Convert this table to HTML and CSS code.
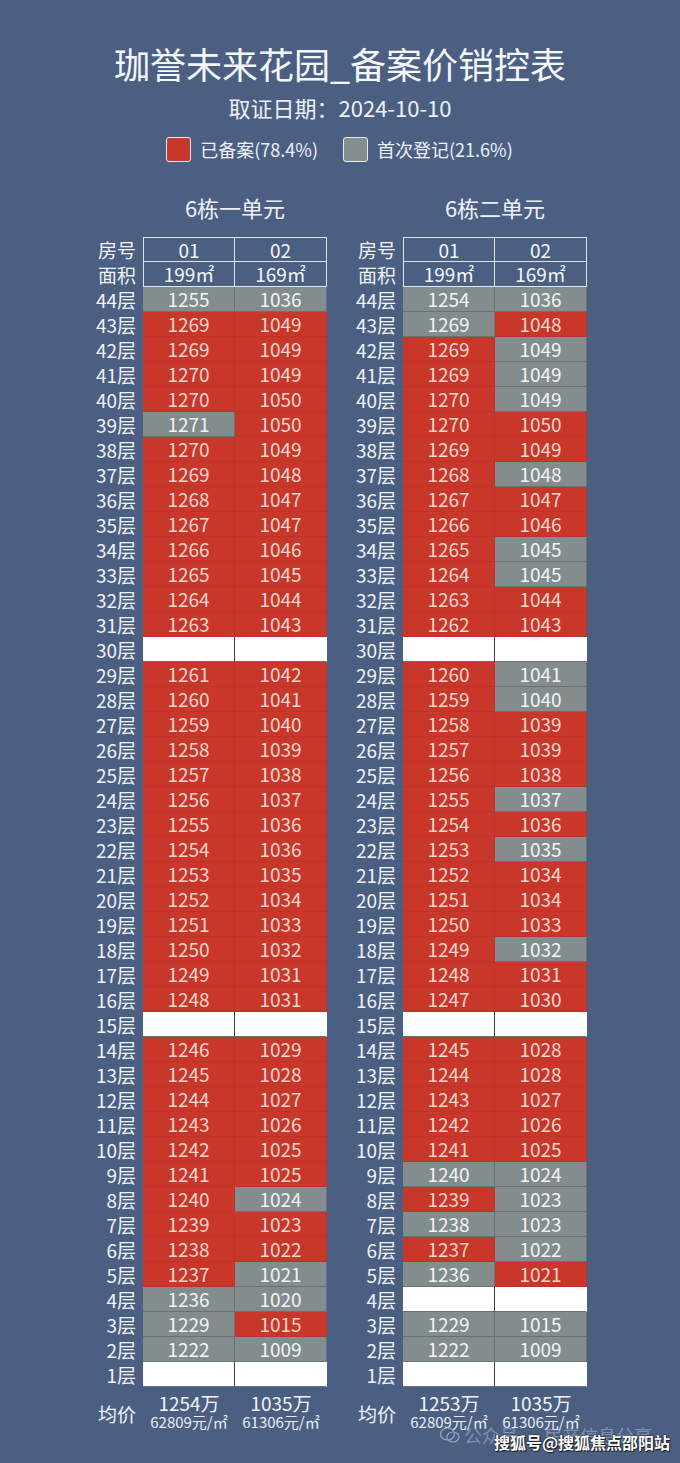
FILE: index.html
```html
<!DOCTYPE html>
<html lang="zh-CN">
<head>
<meta charset="utf-8">
<title>珈誉未来花园_备案价销控表</title>
<link rel="stylesheet" href="styles.css">
</head>
<body>
<div class="page">
  <h1 class="title">珈誉未来花园_备案价销控表</h1>
  <div class="date">取证日期：2024-10-10</div>
  <div class="legend">
    <span class="legend-item"><span class="swatch swatch-red"></span>已备案(78.4%)</span>
    <span class="legend-item"><span class="swatch swatch-grey"></span>首次登记(21.6%)</span>
  </div>

  <div class="blocks">
    <section class="block">
      <h2 class="block-title">6栋一单元</h2>
      <div class="grid">
        <span class="fl">房号</span><span class="hc top first">01</span><span class="hc top">02</span>
        <span class="fl">面积</span><span class="hc first">199㎡</span><span class="hc">169㎡</span>
        <span class="fl">44层</span><span class="c g">1255</span><span class="c g">1036</span>
        <span class="fl">43层</span><span class="c r">1269</span><span class="c r">1049</span>
        <span class="fl">42层</span><span class="c r">1269</span><span class="c r">1049</span>
        <span class="fl">41层</span><span class="c r">1270</span><span class="c r">1049</span>
        <span class="fl">40层</span><span class="c r">1270</span><span class="c r">1050</span>
        <span class="fl">39层</span><span class="c g">1271</span><span class="c r">1050</span>
        <span class="fl">38层</span><span class="c r">1270</span><span class="c r">1049</span>
        <span class="fl">37层</span><span class="c r">1269</span><span class="c r">1048</span>
        <span class="fl">36层</span><span class="c r">1268</span><span class="c r">1047</span>
        <span class="fl">35层</span><span class="c r">1267</span><span class="c r">1047</span>
        <span class="fl">34层</span><span class="c r">1266</span><span class="c r">1046</span>
        <span class="fl">33层</span><span class="c r">1265</span><span class="c r">1045</span>
        <span class="fl">32层</span><span class="c r">1264</span><span class="c r">1044</span>
        <span class="fl">31层</span><span class="c r">1263</span><span class="c r">1043</span>
        <span class="fl">30层</span><span class="c w first"></span><span class="c w"></span>
        <span class="fl">29层</span><span class="c r">1261</span><span class="c r">1042</span>
        <span class="fl">28层</span><span class="c r">1260</span><span class="c r">1041</span>
        <span class="fl">27层</span><span class="c r">1259</span><span class="c r">1040</span>
        <span class="fl">26层</span><span class="c r">1258</span><span class="c r">1039</span>
        <span class="fl">25层</span><span class="c r">1257</span><span class="c r">1038</span>
        <span class="fl">24层</span><span class="c r">1256</span><span class="c r">1037</span>
        <span class="fl">23层</span><span class="c r">1255</span><span class="c r">1036</span>
        <span class="fl">22层</span><span class="c r">1254</span><span class="c r">1036</span>
        <span class="fl">21层</span><span class="c r">1253</span><span class="c r">1035</span>
        <span class="fl">20层</span><span class="c r">1252</span><span class="c r">1034</span>
        <span class="fl">19层</span><span class="c r">1251</span><span class="c r">1033</span>
        <span class="fl">18层</span><span class="c r">1250</span><span class="c r">1032</span>
        <span class="fl">17层</span><span class="c r">1249</span><span class="c r">1031</span>
        <span class="fl">16层</span><span class="c r">1248</span><span class="c r">1031</span>
        <span class="fl">15层</span><span class="c w first"></span><span class="c w"></span>
        <span class="fl">14层</span><span class="c r">1246</span><span class="c r">1029</span>
        <span class="fl">13层</span><span class="c r">1245</span><span class="c r">1028</span>
        <span class="fl">12层</span><span class="c r">1244</span><span class="c r">1027</span>
        <span class="fl">11层</span><span class="c r">1243</span><span class="c r">1026</span>
        <span class="fl">10层</span><span class="c r">1242</span><span class="c r">1025</span>
        <span class="fl">9层</span><span class="c r">1241</span><span class="c r">1025</span>
        <span class="fl">8层</span><span class="c r">1240</span><span class="c g">1024</span>
        <span class="fl">7层</span><span class="c r">1239</span><span class="c r">1023</span>
        <span class="fl">6层</span><span class="c r">1238</span><span class="c r">1022</span>
        <span class="fl">5层</span><span class="c r">1237</span><span class="c g">1021</span>
        <span class="fl">4层</span><span class="c g">1236</span><span class="c g">1020</span>
        <span class="fl">3层</span><span class="c g">1229</span><span class="c r">1015</span>
        <span class="fl">2层</span><span class="c g">1222</span><span class="c g">1009</span>
        <span class="fl">1层</span><span class="c w first"></span><span class="c w"></span>
        <span class="fl avg-label">均价</span>
        <span class="avg"><span class="avg-total">1254万</span><span class="avg-unit">62809元/㎡</span></span>
        <span class="avg"><span class="avg-total">1035万</span><span class="avg-unit">61306元/㎡</span></span>
      </div>
    </section>

    <section class="block">
      <h2 class="block-title">6栋二单元</h2>
      <div class="grid">
        <span class="fl">房号</span><span class="hc top first">01</span><span class="hc top">02</span>
        <span class="fl">面积</span><span class="hc first">199㎡</span><span class="hc">169㎡</span>
        <span class="fl">44层</span><span class="c g">1254</span><span class="c g">1036</span>
        <span class="fl">43层</span><span class="c g">1269</span><span class="c r">1048</span>
        <span class="fl">42层</span><span class="c r">1269</span><span class="c g">1049</span>
        <span class="fl">41层</span><span class="c r">1269</span><span class="c g">1049</span>
        <span class="fl">40层</span><span class="c r">1270</span><span class="c g">1049</span>
        <span class="fl">39层</span><span class="c r">1270</span><span class="c r">1050</span>
        <span class="fl">38层</span><span class="c r">1269</span><span class="c r">1049</span>
        <span class="fl">37层</span><span class="c r">1268</span><span class="c g">1048</span>
        <span class="fl">36层</span><span class="c r">1267</span><span class="c r">1047</span>
        <span class="fl">35层</span><span class="c r">1266</span><span class="c r">1046</span>
        <span class="fl">34层</span><span class="c r">1265</span><span class="c g">1045</span>
        <span class="fl">33层</span><span class="c r">1264</span><span class="c g">1045</span>
        <span class="fl">32层</span><span class="c r">1263</span><span class="c r">1044</span>
        <span class="fl">31层</span><span class="c r">1262</span><span class="c r">1043</span>
        <span class="fl">30层</span><span class="c w first"></span><span class="c w"></span>
        <span class="fl">29层</span><span class="c r">1260</span><span class="c g">1041</span>
        <span class="fl">28层</span><span class="c r">1259</span><span class="c g">1040</span>
        <span class="fl">27层</span><span class="c r">1258</span><span class="c r">1039</span>
        <span class="fl">26层</span><span class="c r">1257</span><span class="c r">1039</span>
        <span class="fl">25层</span><span class="c r">1256</span><span class="c r">1038</span>
        <span class="fl">24层</span><span class="c r">1255</span><span class="c g">1037</span>
        <span class="fl">23层</span><span class="c r">1254</span><span class="c r">1036</span>
        <span class="fl">22层</span><span class="c r">1253</span><span class="c g">1035</span>
        <span class="fl">21层</span><span class="c r">1252</span><span class="c r">1034</span>
        <span class="fl">20层</span><span class="c r">1251</span><span class="c r">1034</span>
        <span class="fl">19层</span><span class="c r">1250</span><span class="c r">1033</span>
        <span class="fl">18层</span><span class="c r">1249</span><span class="c g">1032</span>
        <span class="fl">17层</span><span class="c r">1248</span><span class="c r">1031</span>
        <span class="fl">16层</span><span class="c r">1247</span><span class="c r">1030</span>
        <span class="fl">15层</span><span class="c w first"></span><span class="c w"></span>
        <span class="fl">14层</span><span class="c r">1245</span><span class="c r">1028</span>
        <span class="fl">13层</span><span class="c r">1244</span><span class="c r">1028</span>
        <span class="fl">12层</span><span class="c r">1243</span><span class="c r">1027</span>
        <span class="fl">11层</span><span class="c r">1242</span><span class="c r">1026</span>
        <span class="fl">10层</span><span class="c r">1241</span><span class="c r">1025</span>
        <span class="fl">9层</span><span class="c g">1240</span><span class="c g">1024</span>
        <span class="fl">8层</span><span class="c r">1239</span><span class="c g">1023</span>
        <span class="fl">7层</span><span class="c g">1238</span><span class="c g">1023</span>
        <span class="fl">6层</span><span class="c r">1237</span><span class="c g">1022</span>
        <span class="fl">5层</span><span class="c g">1236</span><span class="c r">1021</span>
        <span class="fl">4层</span><span class="c w first"></span><span class="c w"></span>
        <span class="fl">3层</span><span class="c g">1229</span><span class="c g">1015</span>
        <span class="fl">2层</span><span class="c g">1222</span><span class="c g">1009</span>
        <span class="fl">1层</span><span class="c w first"></span><span class="c w"></span>
        <span class="fl avg-label">均价</span>
        <span class="avg"><span class="avg-total">1253万</span><span class="avg-unit">62809元/㎡</span></span>
        <span class="avg"><span class="avg-total">1035万</span><span class="avg-unit">61306元/㎡</span></span>
      </div>
    </section>
  </div>

  <div class="wm-faint">
    <svg class="wm-icon" width="20" height="16" viewBox="0 0 20 16" aria-hidden="true">
      <ellipse cx="7.5" cy="7" rx="7" ry="6" fill="none" stroke="#9aa5b8" stroke-width="1.2"/>
      <ellipse cx="13" cy="10" rx="6" ry="5" fill="none" stroke="#9aa5b8" stroke-width="1.2"/>
    </svg>
    <span>公众号 · 房产信息分享</span>
  </div>
  <div class="wm-strong">搜狐号@搜狐焦点邵阳站</div>
</div>
</body>
</html>
```

FILE: styles.css
```css
html, body {
  margin: 0;
  padding: 0;
}

body {
  background: #4b5f83;
  color: #eef2f6;
  font-family: "Noto Sans CJK SC", "Microsoft YaHei", sans-serif;
}

.page {
  position: relative;
  height: 1463px;
  box-sizing: border-box;
  padding-top: 41px;
  overflow: hidden;
}

.title {
  margin: 0;
  font-size: 36px;
  line-height: 44px;
  font-weight: 400;
  text-align: center;
  color: #f4f6f9;
}

.date {
  margin-top: 7px;
  font-size: 22px;
  line-height: 30px;
  text-align: center;
  color: #eef1f5;
}

.legend {
  margin-top: 15px;
  display: flex;
  justify-content: center;
  gap: 25px;
  padding-right: 1px;
}

.legend-item {
  display: flex;
  align-items: center;
  gap: 9px;
  font-size: 18px;
  line-height: 25px;
  color: #eef1f5;
}

.swatch {
  width: 25px;
  height: 25px;
  box-sizing: border-box;
  border: 1.5px solid #e9ecef;
  border-radius: 3px;
}

.swatch-red { background: #c9362a; }
.swatch-grey { background: #858f90; }

.blocks {
  display: flex;
  gap: 13px;
  padding-left: 80px;
  margin-top: 30px;
}

.block {
  width: 247px;
}

.block-title {
  margin: 0 0 15px 63px;
  width: 184px;
  font-size: 22px;
  line-height: 30px;
  font-weight: 400;
  text-align: center;
  color: #eef1f5;
}

.grid {
  display: grid;
  grid-template-columns: 63px 92px 92px;
  grid-auto-rows: 25px;
}

.fl {
  padding-right: 7px;
  text-align: right;
  font-size: 19px;
  line-height: 25px;
  color: #f0f3f7;
  white-space: nowrap;
}

.hc,
.c {
  box-sizing: border-box;
  font-size: 19px;
  line-height: 24px;
  text-align: center;
}

.hc {
  color: #f4f6f9;
  border-right: 1px solid #dfe5ec;
  border-bottom: 1px solid #dfe5ec;
  line-height: 23px;
}

.hc.top { border-top: 1px solid #dfe5ec; }
.hc.first { border-left: 1px solid #dfe5ec; }

.c {
  border-right: 1px solid transparent;
  border-bottom: 1px solid transparent;
}

.c.r {
  background: #c9362a;
  color: #f7d8cf;
  border-color: #bf3228;
}

.c.g {
  background: #838d8e;
  color: #f2f4f5;
  border-color: #687274;
}

.c.w {
  background: #ffffff;
  border-color: #ffffff;
  border-bottom-color: #6a6f74;
}

.c.w.first {
  border-right-color: #3b3e42;
}

.avg-label {
  grid-row: span 2;
  padding-top: 16px;
  line-height: 22px;
}

.avg {
  grid-row: span 2;
  display: flex;
  flex-direction: column;
  align-items: center;
  padding-top: 6px;
}

.avg-total {
  font-size: 19px;
  line-height: 20px;
  color: #f2f4f7;
}

.avg-unit {
  font-size: 15px;
  line-height: 17px;
  color: #e9edf2;
  white-space: nowrap;
}

.wm-faint {
  position: absolute;
  left: 440px;
  top: 1424px;
  display: flex;
  align-items: center;
  gap: 4px;
  font-size: 18px;
  line-height: 22px;
  color: rgba(200, 210, 225, 0.45);
  white-space: nowrap;
}

.wm-icon {
  display: block;
}

.wm-strong {
  position: absolute;
  left: 494px;
  top: 1431px;
  font-size: 16px;
  line-height: 22px;
  font-weight: 700;
  color: #ffffff;
  white-space: nowrap;
  text-shadow: 1px 1px 0 #1e1e1e, 0 0 2px #000000;
}
```
